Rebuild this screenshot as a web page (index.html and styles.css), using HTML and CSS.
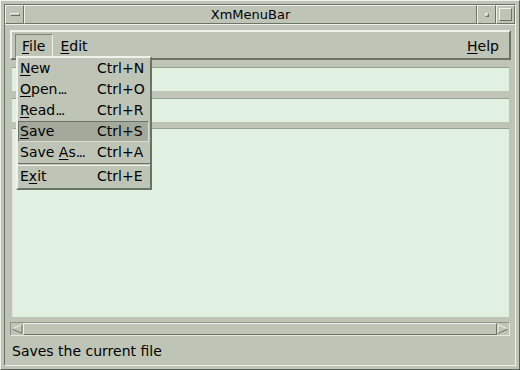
FILE: index.html
```html
<!DOCTYPE html>
<html>
<head>
<meta charset="utf-8">
<link rel="stylesheet" href="styles.css">
</head>
<body>
<div class="window">
  <div class="inner">
    <div class="titlebar">
      <div class="tb-btn tb-menu"><span class="tb-bar"></span></div>
      <div class="tb-title">XmMenuBar</div>
      <div class="tb-btn tb-min"><span class="tb-dot"></span></div>
      <div class="tb-btn tb-max"><span class="tb-sq"></span></div>
    </div>
    <div class="client">
      <div class="menubar">
        <div class="cascade active"><u>F</u>ile</div>
        <div class="cascade"><u>E</u>dit</div>
        <div class="spacer"></div>
        <div class="cascade help"><u>H</u>elp</div>
      </div>
      <div class="field f1"></div>
      <div class="field f2"></div>
      <div class="textarea"></div>
      <div class="hscroll">
        <div class="arrow">
          <svg width="12" height="12" viewBox="0 0 12 12"><polyline points="11,1.5 1,6" fill="none" stroke="#edf1e9" stroke-width="1"/><polyline points="1,6 11,10.5 11,1.5" fill="none" stroke="#6b7266" stroke-width="1"/></svg>
        </div>
        <div class="slider"></div>
        <div class="arrow">
          <svg width="12" height="12" viewBox="0 0 12 12"><polyline points="1,10.5 1,1.5 11,6" fill="none" stroke="#edf1e9" stroke-width="1"/><polyline points="11,6 1,10.5" fill="none" stroke="#6b7266" stroke-width="1"/></svg>
        </div>
      </div>
      <div class="status">Saves the current file</div>
    </div>
  </div>
  <div class="menu">
    <div class="item"><span><u>N</u>ew</span><span>Ctrl+N</span></div>
    <div class="item"><span><u>O</u>pen<span class="dots">...</span></span><span>Ctrl+O</span></div>
    <div class="item"><span><u>R</u>ead<span class="dots">...</span></span><span>Ctrl+R</span></div>
    <div class="item armed"><span><u>S</u>ave</span><span>Ctrl+S</span></div>
    <div class="item"><span>Save <u>A</u>s<span class="dots">...</span></span><span>Ctrl+A</span></div>
    <div class="sep"></div>
    <div class="item"><span>E<u>x</u>it</span><span>Ctrl+E</span></div>
  </div>
</div>
</body>
</html>
```
FILE: styles.css
```css
* { box-sizing: border-box; }
body {
  margin: 0;
  width: 520px;
  height: 370px;
  overflow: hidden;
  font-family: "DejaVu Sans", sans-serif;
  font-size: 14px;
  color: #000;
  background: #bec5b7;
}
u { text-decoration: underline; text-underline-offset: 2px; text-decoration-thickness: 1px; }
.dots { letter-spacing: -1.6px; }

.window {
  position: relative;
  width: 520px;
  height: 370px;
  background: #bec5b7;
  border: 1px solid;
  border-color: #eef2ea #596054 #596054 #eef2ea;
  padding: 3px;
}
.inner {
  height: 100%;
  border: 1px solid;
  border-color: #6b7266 #eef2ea #eef2ea #6b7266;
  display: flex;
  flex-direction: column;
}

.titlebar {
  display: flex;
  height: 19px;
  flex: none;
}
.tb-btn, .tb-title {
  border: 1px solid;
  border-color: #eef2ea #6b7266 #6b7266 #eef2ea;
  display: flex;
  align-items: center;
  justify-content: center;
}
.tb-menu { width: 19px; }
.tb-min { width: 19px; }
.tb-max { width: 19px; }
.tb-title {
  flex: 1;
  font-size: 13px;
  line-height: 17px;
}
.tb-bar {
  width: 10px;
  height: 3px;
  border: 1px solid;
  border-color: #eef2ea #6b7266 #6b7266 #eef2ea;
}
.tb-dot {
  width: 4px;
  height: 4px;
  border: 1px solid;
  border-color: #eef2ea #6b7266 #6b7266 #eef2ea;
}
.tb-sq {
  width: 13px;
  height: 13px;
  border: 1px solid;
  border-color: #eef2ea #6b7266 #6b7266 #eef2ea;
}

.client {
  flex: 1;
  display: flex;
  flex-direction: column;
  padding: 5px 4px 0 5px;
  border-top: 1px solid #eef2ea;
}

.menubar {
  display: flex;
  height: 30px;
  flex: none;
  border: 2px solid;
  border-color: #eef2ea #6b7266 #6b7266 #eef2ea;
  padding: 2px 2px 0 3px;
}
.cascade {
  height: 24px;
  line-height: 22px;
  padding: 0 7px 0 6px;
  border: 1px solid transparent;
}
.cascade.active {
  border-color: #7d8478 #eef2ea #bec5b7 #7d8478;
}
.spacer { flex: 1; }

.field {
  flex: none;
  height: 24px;
  margin: 7px 2px 0 2px;
  background: #e1f1e1;
  border-top: 1px solid #9aa194;
}
.textarea {
  flex: none;
  height: 189px;
  margin: 6px 2px 0 2px;
  background: #e1f1e1;
  border-top: 1px solid #9aa194;
  border-left: 1px solid #dfe5db;
}

.hscroll {
  flex: none;
  height: 14px;
  margin-top: 5px;
  margin-right: 1px;
  display: flex;
  border: 1px solid;
  border-color: #8d9488 #e4e9e0 #e4e9e0 #8d9488;
}
.arrow {
  width: 12px;
  height: 12px;
  display: flex;
}
.slider {
  flex: 1;
  border: 1px solid;
  border-color: #eef2ea #6b7266 #6b7266 #eef2ea;
}

.status {
  padding: 7px 0 0 2px;
  line-height: 17px;
}

.menu {
  position: absolute;
  left: 15px;
  top: 55px;
  width: 136px;
  background: #bec5b7;
  border: 2px solid;
  border-color: #eef2ea #6b7266 #6b7266 #eef2ea;
  padding-bottom: 1px;
}
.item {
  display: grid;
  grid-template-columns: 77px 1fr;
  height: 21px;
  line-height: 19px;
  padding: 0 1px;
  border: 1px solid transparent;
}
.item.armed {
  background: #a3aa9c;
  border-color: #6b7266 #d6dcd2 #d6dcd2 #6b7266;
  margin-right: 1px;
}
.sep {
  height: 3px;
  border-top: 1px solid #6b7266;
  border-bottom: 1px solid #eef2ea;
}
```
